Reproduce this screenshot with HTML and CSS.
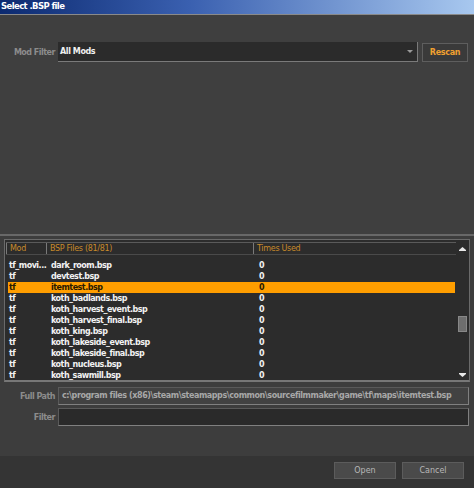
FILE: index.html
```html
<!DOCTYPE html>
<html>
<head>
<meta charset="utf-8">
<link rel="stylesheet" href="styles.css">
</head>
<body>
<div class="win">
  <div class="title">Select .BSP file</div>
  <div class="top">
    <div class="filter-row">
      <span class="lbl">Mod Filter</span>
      <div class="combo"><span>All Mods</span><span class="arrow"></span></div>
      <div class="rescan">Rescan</div>
    </div>
  </div>
  <div class="listarea">
    <div class="list">
      <div class="main">
        <div class="head">
          <div class="hc c1">Mod</div>
          <div class="hc c2">BSP Files (81/81)</div>
          <div class="hc c3">Times Used</div>
        </div>
        <div class="rows">
          <div class="row"><span class="c1">tf_movi...</span><span class="c2">dark_room.bsp</span><span class="c3">0</span></div>
          <div class="row"><span class="c1">tf</span><span class="c2">devtest.bsp</span><span class="c3">0</span></div>
          <div class="row sel"><span class="c1">tf</span><span class="c2">itemtest.bsp</span><span class="c3">0</span></div>
          <div class="row"><span class="c1">tf</span><span class="c2">koth_badlands.bsp</span><span class="c3">0</span></div>
          <div class="row"><span class="c1">tf</span><span class="c2">koth_harvest_event.bsp</span><span class="c3">0</span></div>
          <div class="row"><span class="c1">tf</span><span class="c2">koth_harvest_final.bsp</span><span class="c3">0</span></div>
          <div class="row"><span class="c1">tf</span><span class="c2">koth_king.bsp</span><span class="c3">0</span></div>
          <div class="row"><span class="c1">tf</span><span class="c2">koth_lakeside_event.bsp</span><span class="c3">0</span></div>
          <div class="row"><span class="c1">tf</span><span class="c2">koth_lakeside_final.bsp</span><span class="c3">0</span></div>
          <div class="row"><span class="c1">tf</span><span class="c2">koth_nucleus.bsp</span><span class="c3">0</span></div>
          <div class="row"><span class="c1">tf</span><span class="c2">koth_sawmill.bsp</span><span class="c3">0</span></div>
        </div>
      </div>
      <div class="scroll">
        <svg class="sa" width="9" height="6" viewBox="0 0 9 6"><path d="M4.5 1 L8 4 L1 4 Z" fill="#e8e8e8"/><rect x="1" y="4" width="7" height="1" fill="#e8e8e8"/></svg>
        <div class="track"><div class="thumb"></div></div>
        <svg class="sa" width="9" height="6" viewBox="0 0 9 6"><rect x="1" y="1" width="7" height="1" fill="#e8e8e8"/><path d="M1 2 L8 2 L4.5 5 Z" fill="#e8e8e8"/></svg>
      </div>
    </div>
  </div>
  <div class="fields">
    <div class="frow">
      <span class="lbl">Full Path</span>
      <div class="field path">c:\program files (x86)\steam\steamapps\common\sourcefilmmaker\game\tf\maps\itemtest.bsp</div>
    </div>
    <div class="frow">
      <span class="lbl">Filter</span>
      <div class="field dark"></div>
    </div>
  </div>
  <div class="bottom">
    <div class="btn">Open</div>
    <div class="btn">Cancel</div>
  </div>
</div>
</body>
</html>
```

FILE: styles.css
```css
* { box-sizing: border-box; }
html, body { margin: 0; padding: 0; }
body {
  width: 474px;
  height: 488px;
  background: #363636;
  font-family: "DejaVu Sans", Verdana, sans-serif;
  font-size: 8px;
  overflow: hidden;
}
.win {
  width: 474px;
  height: 488px;
  display: flex;
  flex-direction: column;
  background: #3d3d3d;
}
.title {
  height: 15px;
  background: linear-gradient(to right, #0c2a70 0%, #3a60b0 40%, #a8c8ef 100%);
  border-bottom: 1px solid #8a8a8a;
  color: #fff;
  font-weight: bold;
  font-size: 8.5px;
  letter-spacing: -0.6px;
  line-height: 13px;
  padding-left: 1px;
}
.top {
  height: 221px;
  background: #3f3f3f;
  padding-top: 27px;
  border-bottom: 2px solid #686868;
}
.filter-row {
  display: flex;
  align-items: center;
  height: 20px;
}
.lbl {
  width: 58px;
  padding-right: 3px;
  text-align: right;
  color: #8c8c8c;
  font-weight: bold;
  letter-spacing: -0.5px;
  flex: none;
}
.combo {
  width: 360px;
  height: 20px;
  background: #2b2b2b;
  border-bottom: 1px solid #7a7a7a;
  border-right: 1px solid #7a7a7a;
  display: flex;
  align-items: center;
  justify-content: space-between;
  color: #f0f0f0;
  font-weight: bold;
  letter-spacing: -0.4px;
  padding-left: 2px;
  padding-right: 4px;
}
.arrow {
  width: 0; height: 0;
  border-left: 3px solid transparent;
  border-right: 3px solid transparent;
  border-top: 3px solid #9a9a9a;
}
.rescan {
  margin-left: 4px;
  width: 46px;
  height: 19px;
  border: 1px solid #5e5e5e;
  background: #3a3a3a;
  color: #f0a030;
  font-weight: bold;
  letter-spacing: -0.3px;
  text-align: center;
  line-height: 17px;
}
.listarea {
  padding: 3px 4px 0 4px;
  background: #3d3d3d;
}
.list {
  height: 143px;
  border: 1px solid #6a6a6a;
  border-bottom: 2px solid #777;
  background: #2c2c2c;
  display: flex;
  padding: 2px 1px 0 1px;
  overflow: hidden;
}
.main { flex: 1; display: flex; flex-direction: column; }
.head {
  display: flex;
  height: 13px;
  border-top: 1px solid #5a5a5a;
  border-bottom: 1px solid #4a4a4a;
  background: #2c2c2c;
}
.hc {
  color: #c88a2a;
  line-height: 11px;
  padding-left: 3px;
  letter-spacing: -0.3px;
  border-left: 1px solid #7a7a7a;
}
.c1 { width: 40px; flex: none; }
.c2 { width: 207px; flex: none; }
.c3 { flex: 1; }
.rows { padding-top: 5px; }
.row {
  display: flex;
  height: 11px;
  line-height: 11px;
  color: #f2f2f2;
  font-weight: bold;
  letter-spacing: -0.5px;
  margin-left: 2px;
  margin-right: 1px;
}
.row .c1 { padding-left: 1px; overflow: hidden; white-space: nowrap; }
.row .c2 { padding-left: 3px; }
.row .c3 { padding-left: 4px; }
.row.sel { background: #ff9e00; color: #2a1a00; }
.scroll {
  width: 12px;
  display: flex;
  flex-direction: column;
  align-items: center;
  padding-top: 4px;
  padding-bottom: 2px;
}
.sa { display: block; flex: none; }
.track { flex: 1; width: 10px; position: relative; }
.thumb {
  position: absolute;
  left: 1px;
  top: 64px;
  width: 9px;
  height: 16px;
  background: #6e6e6e;
  border: 1px solid #888;
}
.fields {
  padding-top: 5px;
  display: flex;
  flex-direction: column;
  gap: 3px;
  height: 74px;
  background: #3d3d3d;
}
.frow { display: flex; align-items: center; }
.field {
  width: 411px;
  height: 18px;
  border-top: 1px solid #5a5a5a;
  border-left: 1px solid #5a5a5a;
  border-bottom: 1px solid #808080;
  border-right: 1px solid #808080;
  line-height: 16px;
  padding-left: 3px;
  white-space: nowrap;
  overflow: hidden;
}
.path { background: #424242; color: #a8a8a8; font-weight: bold; letter-spacing: -0.42px; }
.dark { background: #2a2a2a; }
.bottom {
  flex: 1;
  background: #343434;
  display: flex;
  justify-content: flex-end;
  align-items: flex-start;
  gap: 6px;
  padding: 6px 10px 0 0;
}
.btn {
  width: 62px;
  height: 17px;
  background: #4a4a4a;
  border: 1px solid #5c5c5c;
  color: #b8b8b8;
  text-align: center;
  line-height: 15px;
}
```
